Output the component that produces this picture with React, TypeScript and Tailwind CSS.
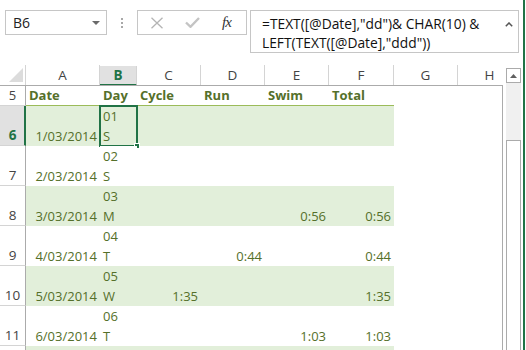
import React from "react";

type Row = {
  n: number;
  date?: string;
  dd?: string;
  d?: string;
  c?: string;
  r?: string;
  s?: string;
  t?: string;
  green: boolean;
  sel?: boolean;
  hideNum?: boolean;
};

const rows: Row[] = [
  { n: 6, date: "1/03/2014", dd: "01", d: "S", green: true, sel: true },
  { n: 7, date: "2/03/2014", dd: "02", d: "S", green: false },
  { n: 8, date: "3/03/2014", dd: "03", d: "M", s: "0:56", t: "0:56", green: true },
  { n: 9, date: "4/03/2014", dd: "04", d: "T", r: "0:44", t: "0:44", green: false },
  { n: 10, date: "5/03/2014", dd: "05", d: "W", c: "1:35", t: "1:35", green: true },
  { n: 11, date: "6/03/2014", dd: "06", d: "T", s: "1:03", t: "1:03", green: false },
  { n: 12, green: true, hideNum: true },
];

const headers = [
  { k: "A", w: "w-[74px]" },
  { k: "B", w: "w-[37px]" },
  { k: "C", w: "w-[64px]" },
  { k: "D", w: "w-[64px]" },
  { k: "E", w: "w-[64px]" },
  { k: "F", w: "w-[65px]" },
  { k: "G", w: "w-[64px]" },
  { k: "H", w: "w-[64px]" },
];

function BottomRight({ w, v, bg }: { w: string; v?: string; bg: string }) {
  return (
    <div className={`${w} ${bg} h-full flex items-end justify-end pr-[3px] leading-[20px]`}>
      {v ? <span>{v}</span> : null}
    </div>
  );
}

export default function App() {
  return (
    <div className="w-[526px] h-[350px] overflow-hidden bg-white flex font-['Open_Sans',sans-serif] text-[13px]">
      <div className="w-[523px] h-full flex flex-col">
        {/* Top bar */}
        <div className="h-[65px] shrink-0 flex items-start pt-[10px] pl-[5px]">
          <div className="w-[102px] h-[25px] border border-[#c6c6c6] flex items-center justify-between pl-[7px] pr-[6px] text-[14px] text-[#222]">
            <span>B6</span>
            <svg width="8" height="4" viewBox="0 0 8 4">
              <polygon points="0,0 8,0 4,4" fill="#6a6a6a" />
            </svg>
          </div>
          <div className="w-[30px] h-[25px] flex flex-col items-center justify-center gap-[2px]">
            <div className="w-[2px] h-[2px] bg-[#a8a8a8]" />
            <div className="w-[2px] h-[2px] bg-[#a8a8a8]" />
            <div className="w-[2px] h-[2px] bg-[#a8a8a8]" />
          </div>
          <div className="w-[110px] h-[25px] border border-[#c6c6c6] flex items-center pl-[12px]">
            <svg width="14" height="12" viewBox="0 0 14 12">
              <path d="M1.5 0.8 L12.5 11.2 M12.5 0.8 L1.5 11.2" stroke="#b4b4b4" strokeWidth="1.3" />
            </svg>
            <svg className="ml-[21px]" width="15" height="11" viewBox="0 0 15 11">
              <path d="M1 5.5 L5.5 9.8 L14 1" stroke="#c4c4c4" strokeWidth="2.4" fill="none" />
            </svg>
            <span className="ml-[22px] font-['Liberation_Serif',serif] italic text-[15px] text-[#333] leading-none tracking-[-1px]">
              fx
            </span>
          </div>
          <div className="ml-[3px] w-[269px] h-[43px] border border-[#c6c6c6] flex justify-between pl-[11px] pr-[5px] pt-[3px] text-[13.8px] leading-[19px] text-[#111]">
            <div>
              <div className="whitespace-pre">=TEXT([@Date],"dd")&amp; CHAR(10) &amp;</div>
              <div className="whitespace-pre">LEFT(TEXT([@Date],"ddd"))</div>
            </div>
            <svg className="mt-[8px]" width="8" height="5" viewBox="0 0 8 5">
              <path d="M0.8 4.3 L4 1 L7.2 4.3" stroke="#555" strokeWidth="1.5" fill="none" />
            </svg>
          </div>
        </div>

        {/* Sheet + scrollbar */}
        <div className="flex-1 flex min-h-0">
          <div className="w-[506px] h-full overflow-hidden flex flex-col">
            {/* Column headers */}
            <div className="h-[20px] shrink-0 flex text-[#444] text-[13.5px]">
              <div className="w-[26px] shrink-0 h-full border-r border-[#d4d4d4] relative">
                <svg className="absolute left-0 top-0" width="25" height="20" viewBox="0 0 25 20">
                  <polygon points="23,3 23,17 9,17" fill="#dcdcdc" />
                </svg>
              </div>
              {headers.map((h) =>
                h.k === "B" ? (
                  <div
                    key={h.k}
                    className={`${h.w} shrink-0 h-full bg-[#e1e1e1] border-r border-[#d4d4d4] border-b-2 border-b-[#217346] flex items-center justify-center font-bold text-[#217346] mt-[1px]`}
                  >
                    {h.k}
                  </div>
                ) : (
                  <div
                    key={h.k}
                    className={`${h.w} shrink-0 h-full border-r border-[#d4d4d4] flex items-center justify-center`}
                  >
                    {h.k}
                  </div>
                )
              )}
            </div>
            {/* Body */}
            <div className="w-[503px] flex-1 border-t border-r border-[#ababab] overflow-hidden text-[#55702a]">
              {/* Row 5 */}
              <div className="h-[20px] flex font-bold leading-[19px]">
                <div className="w-[26px] shrink-0 h-full border-r border-[#ababab] border-b border-b-[#d4d4d4] flex items-center justify-center font-normal text-[#444]">
                  5
                </div>
                <div className="w-[74px] shrink-0 h-full border-b border-[#9bbb59] pl-[3px]">Date</div>
                <div className="w-[37px] shrink-0 h-full border-b border-[#9bbb59] pl-[3px]">Day</div>
                <div className="w-[64px] shrink-0 h-full border-b border-[#9bbb59] pl-[3px]">Cycle</div>
                <div className="w-[64px] shrink-0 h-full border-b border-[#9bbb59] pl-[3px]">Run</div>
                <div className="w-[64px] shrink-0 h-full border-b border-[#9bbb59] pl-[3px]">Swim</div>
                <div className="w-[65px] shrink-0 h-full border-b border-[#9bbb59] pl-[3px]">Total</div>
              </div>
              {rows.map((r) => {
                const bg = r.green ? "bg-[#e2efda]" : "bg-white";
                return (
                  <div key={r.n} className="h-[40px] flex shrink-0">
                    {r.sel ? (
                      <div className="w-[26px] shrink-0 h-full bg-[#e1e1e1] border-r-2 border-[#217346] border-b border-b-[#d4d4d4] flex items-end justify-center leading-[20px] font-bold text-[#217346] text-[13.5px] pl-[1px]">
                        {r.n}
                      </div>
                    ) : (
                      <div className="w-[26px] shrink-0 h-full border-r border-[#ababab] border-b border-b-[#d4d4d4] flex items-end justify-center leading-[20px] text-[#444] text-[13.5px]">
                        {r.hideNum ? null : r.n}
                      </div>
                    )}
                    <BottomRight w="w-[74px] shrink-0" v={r.date} bg={bg} />
                    <div className={`w-[37px] shrink-0 h-full ${bg} relative pl-[3px] leading-[20px] flex flex-col`}>
                      {r.dd ? <span>{r.dd}</span> : null}
                      {r.d ? <span>{r.d}</span> : null}
                      {r.sel ? (
                        <>
                          <div className="absolute -left-[1px] -top-[1px] -right-[1px] -bottom-[1px] border-2 border-[#217346]" />
                          <div className="absolute -right-[3px] -bottom-[3px] w-[6px] h-[6px] bg-[#217346] border border-white" />
                        </>
                      ) : null}
                    </div>
                    <BottomRight w="w-[64px] shrink-0" v={r.c} bg={bg} />
                    <BottomRight w="w-[64px] shrink-0" v={r.r} bg={bg} />
                    <BottomRight w="w-[64px] shrink-0" v={r.s} bg={bg} />
                    <BottomRight w="w-[65px] shrink-0" v={r.t} bg={bg} />
                    <div className="w-[64px] shrink-0 h-full" />
                    <div className="w-[64px] shrink-0 h-full" />
                  </div>
                );
              })}
            </div>
          </div>
          {/* Scrollbar */}
          <div className="w-[15px] shrink-0 mt-[3px] flex flex-col">
            <div className="h-[15px] shrink-0 border border-[#ababab] bg-white flex items-center justify-center">
              <svg width="7" height="4" viewBox="0 0 7 4">
                <polygon points="0,4 7,4 3.5,0" fill="#606060" />
              </svg>
            </div>
            <div className="h-[57px] shrink-0 bg-[#f0f0f0]" />
            <div className="flex-1 border border-b-0 border-[#ababab] bg-white" />
          </div>
        </div>
      </div>
      <div className="w-[2px] h-full bg-[#217346]" />
      <div className="w-[1px] h-full" />
    </div>
  );
}
